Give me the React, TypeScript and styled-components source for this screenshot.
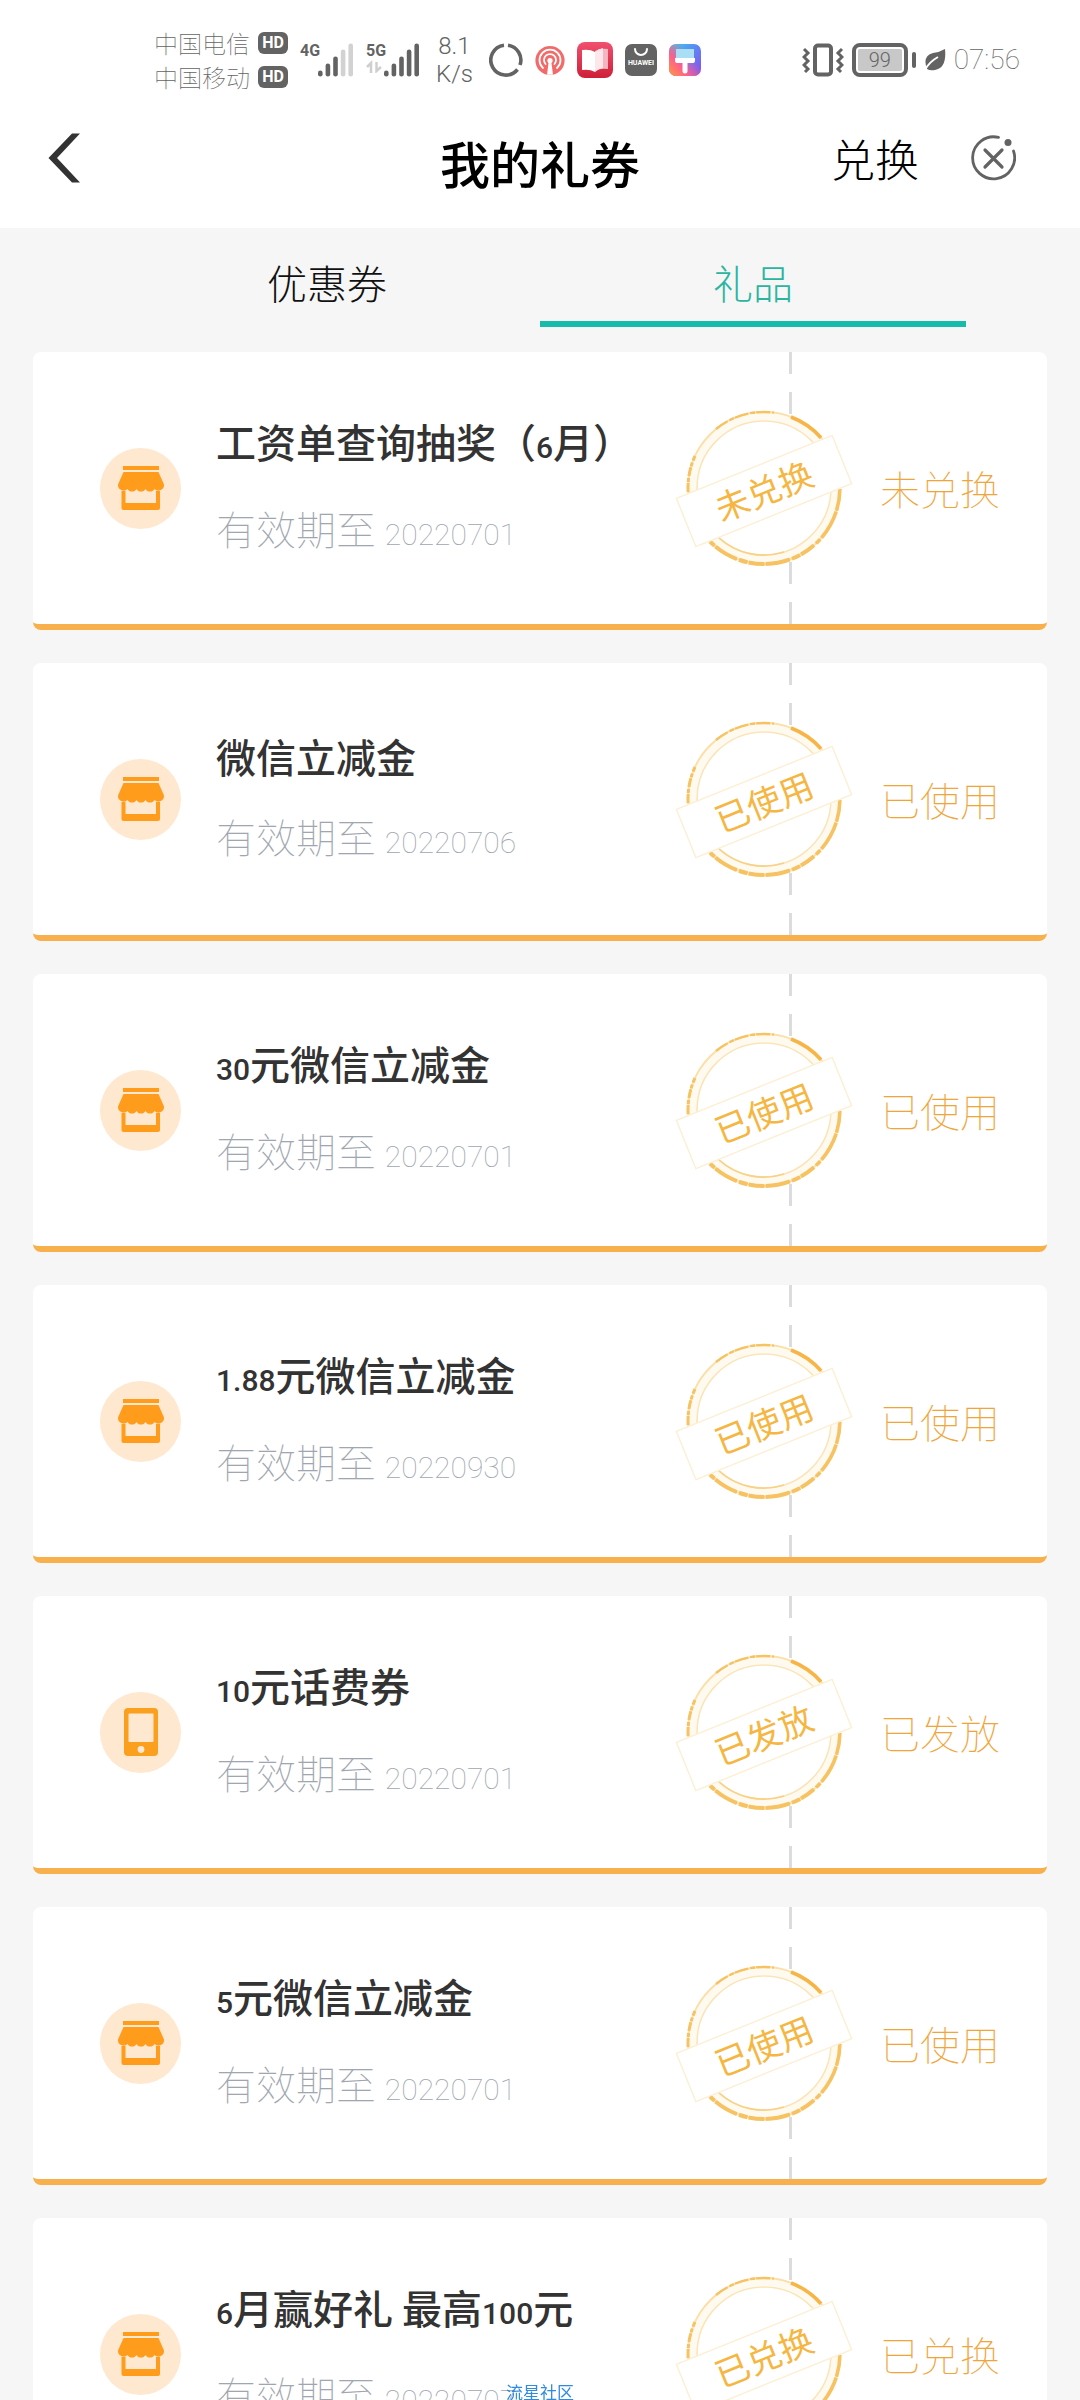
import React, { useState } from "react";
import styled, { createGlobalStyle } from "styled-components";

const sans = `"Noto Sans CJK SC", "Noto Sans", sans-serif`;
const ink = "#636363";
const amber = "#f0a53a";

const GlobalStyle = createGlobalStyle`
  * { box-sizing: border-box; }
  body { margin: 0; background: #f6f6f6; font-family: ${sans}; }
  button { border: 0; padding: 0; background: none; font-family: inherit; cursor: pointer; }
  h1, h2, p, ul { margin: 0; padding: 0; }
  svg { display: block; flex: none; }
`;

const Screen = styled.div`
  display: flex;
  flex-direction: column;
  height: 100vh;
  overflow: hidden;
`;

/* ---------- status bar ---------- */

const StatusBar = styled.div`
  display: flex;
  justify-content: space-between;
  align-items: center;
  flex: none;
  height: 100px;
  padding: 20px 60px 0 154px;
  background: #fff;
  color: ${ink};
`;

const StatusGroup = styled.div<{ $gap: number }>`
  display: flex;
  align-items: center;
  gap: ${(p) => p.$gap}px;
`;

const Carriers = styled.div`
  display: flex;
  flex-direction: column;
`;

const Carrier = styled.div`
  display: flex;
  align-items: center;
  gap: 8px;
  height: 34px;
  font-size: 24px;
  font-weight: 100;
  line-height: 34px;
  white-space: nowrap;
`;

const HdBadge = styled.span`
  width: 30px;
  height: 22px;
  border-radius: 6px;
  background: ${ink};
  color: #fff;
  font: 700 16px/22px Roboto, sans-serif;
  text-align: center;
`;

const Signal = styled.div`
  display: flex;
  align-items: flex-start;
  height: 34px;
`;

const SignalLabel = styled.span`
  width: 18px;
  font: 700 16px/16px "Liberation Sans Narrow", Roboto, sans-serif;
`;

const NetSpeed = styled.div`
  padding: 0 4px;
  font: 300 24px/28px Roboto, sans-serif;
  text-align: center;
`;

const BatteryLevel = styled.span`
  display: flex;
  align-items: center;
  justify-content: center;
  width: 56px;
  height: 34px;
  padding: 2px;
  border: 4px solid ${ink};
  border-radius: 8px;
  background: #c8c8c8 content-box;
  font: 300 20px/22px Roboto, sans-serif;
`;

const BatteryTip = styled.span`
  width: 4px;
  height: 16px;
  border-radius: 2px;
  background: ${ink};
`;

const Clock = styled.time`
  font: 100 28px/34px Roboto, sans-serif;
`;

/* ---------- header ---------- */

const Header = styled.header`
  display: grid;
  grid-template-columns: 1fr auto 1fr;
  align-items: center;
  flex: none;
  height: 128px;
  padding: 0 64px 12px 48px;
  background: #fff;
`;

const IconButton = styled.button`
  display: flex;
  justify-self: start;
`;

const Title = styled.h1`
  padding: 8px 0 0 16px;
  font-size: 50px;
  font-weight: 500;
  line-height: 64px;
  color: #000;
`;

const Actions = styled.div`
  display: flex;
  align-items: center;
  justify-content: flex-end;
  gap: 52px;
`;

const RedeemButton = styled.button`
  font-size: 44px;
  font-weight: 300;
  line-height: 64px;
  color: #000;
`;

/* ---------- tabs ---------- */

const Tabs = styled.nav`
  display: flex;
  flex: none;
  padding: 0 114px;
`;

const Tab = styled.button<{ $active: boolean }>`
  flex: 1;
  padding: 32px 0 17px;
  border-bottom: 6px solid ${(p) => (p.$active ? "#17bbac" : "transparent")};
  font-size: 40px;
  font-weight: 300;
  line-height: 44px;
  color: ${(p) => (p.$active ? "#2bb5a0" : "#111")};
`;

/* ---------- coupon list ---------- */

const CouponList = styled.ul`
  display: flex;
  flex-direction: column;
  flex: 1;
  gap: 33px;
  min-height: 0;
  padding: 25px 33px 33px;
  overflow-y: auto;
  scrollbar-width: none;
  list-style: none;
`;

const Coupon = styled.li`
  display: flex;
  flex: none;
  height: 278px;
  border-bottom: 6px solid #f7b04c;
  border-radius: 8px;
  background: #fff;
`;

const CouponMain = styled.div`
  display: flex;
  align-items: center;
  flex: 1;
  gap: 35px;
  padding-left: 67px;
`;

const IconDisc = styled.span`
  display: flex;
  align-items: center;
  justify-content: center;
  width: 81px;
  height: 81px;
  border-radius: 50%;
  background: #ffe8cf;
`;

const CouponText = styled.div`
  display: flex;
  flex-direction: column;
  gap: 24px;
`;

const CouponName = styled.h2`
  font-size: 40px;
  font-weight: 500;
  line-height: 56px;
  color: #333;
  white-space: pre;
`;

const Expiry = styled.p`
  font-size: 40px;
  font-weight: 100;
  line-height: 56px;
  color: #9fa6b0;
  white-space: pre;
`;

const Digits = styled.span`
  font-family: "Liberation Sans Narrow", Roboto, sans-serif;
  font-size: 30px;
`;

const Stub = styled.div`
  position: relative;
  display: flex;
  align-items: center;
  width: 258px;
  padding-left: 91px;
  background:
    repeating-linear-gradient(to bottom, #dcdcdc 0 22px, transparent 22px 40px) left top / 3px 50% no-repeat,
    repeating-linear-gradient(to top, #dcdcdc 0 22px, transparent 22px 40px) left bottom / 3px 50% no-repeat;
`;

const StatusText = styled.span`
  font-size: 40px;
  font-weight: 100;
  line-height: 56px;
  color: ${amber};
`;

const StampSvg = styled.svg`
  position: absolute;
  top: 50%;
  left: -119px;
  transform: translateY(-50%);
  font-family: ${sans};
  font-size: 34px;
  font-weight: 400;
`;

const Watermark = styled.div`
  position: fixed;
  right: 0;
  bottom: 0;
  left: 0;
  font-size: 17px;
  line-height: 16px;
  text-align: center;
  color: #2f8be0;
  pointer-events: none;
`;

/* ---------- drawings ---------- */

function Bars({ strength }: { strength: number }) {
  return (
    <svg width="36" height="34" viewBox="0 0 36 34">
      {[6, 13, 20, 27, 33].map((h, i) => (
        <rect
          key={h}
          x={i * 7.6}
          y={33.5 - h}
          width="4.6"
          height={h}
          rx="2.3"
          fill={i < strength ? ink : "#d2d2d2"}
        />
      ))}
    </svg>
  );
}

function ShopIcon() {
  return (
    <svg width="48" height="46" viewBox="0 0 48 46" fill="#ff9c1c">
      <rect x="6" y="1" width="36" height="4" />
      <path d="M6.500 7H41.500L47 19.500a5.600 5.600 0 0 1-9.500 4.500a5.200 5.200 0 0 1-9 0a5.200 5.200 0 0 1-9 0a5.200 5.200 0 0 1-9 0A5.600 5.600 0 0 1 1 19.500Z" />
      <path d="M4.500 26H8.500V38H39V26H43V43a2 2 0 0 1-2 2H6.500a2 2 0 0 1-2-2Z" />
    </svg>
  );
}

function PhoneIcon() {
  return (
    <svg width="34" height="48" viewBox="0 0 34 48">
      <rect width="34" height="48" rx="4" fill="#fa9f1e" />
      <rect x="4.500" y="5.500" width="25" height="28.500" rx="1" fill="#ffe8cf" />
      <circle cx="17" cy="41.500" r="3.400" fill="#ffe8cf" />
    </svg>
  );
}

function Stamp({ label }: { label: string }) {
  return (
    <StampSvg width="188" height="164" viewBox="-94 -82 188 164">
      <circle r="77" fill="#fff" />
      <circle r="72" fill="none" stroke="#fffaf0" strokeWidth="8" />
      <circle r="76" fill="none" stroke="#fbdfa6" strokeWidth="2" />
      <g fill="none" stroke="#f6c262">
        <path d="M-75.900 4A76 76 0 0 1-69-32" strokeWidth="3" strokeDasharray="9 1 4 2" />
        <path d="M-48-59A76 76 0 0 1 10-75.400" strokeWidth="2.400" strokeDasharray="14 2 5 1" />
        <path d="M27-71A76 76 0 0 1 57-50.300" strokeWidth="3.600" stroke="#f7b548" />
        <path d="M75.900 1A76 76 0 0 1 52 55.500" strokeWidth="3.600" strokeDasharray="22 1 30 2" />
        <path d="M50 57.300A76 76 0 0 1-54 53.500" strokeWidth="4" strokeDasharray="16 1 9 2 25 1" />
      </g>
      <circle r="67" fill="none" stroke="#fbe5b8" strokeWidth="1.600" />
      <path d="M-45 50A67 67 0 0 0 20 64" fill="none" stroke="#f8d184" strokeWidth="1.600" />
      <g transform="translate(0 3) rotate(-22)">
        <rect x="-84" y="-26" width="168" height="52" fill="#fff" stroke="#fcefd3" strokeWidth="1.400" />
        <text y="13" textAnchor="middle" fill="#f5b642">
          {label}
        </text>
      </g>
    </StampSvg>
  );
}

function ActivityIcons() {
  return (
    <>
      <svg width="34" height="34" viewBox="0 0 34 34" fill="none" stroke={ink} strokeWidth="3.600">
        <path d="M19 2.200A15 15 0 0 1 31 22M28.500 26.500A15 15 0 1 1 15 2.200" />
      </svg>
      <svg width="30" height="34" viewBox="0 0 30 34">
        <circle cx="15" cy="17.500" r="14.600" fill="#f26b6b" />
        <g fill="none" stroke="#fff" strokeWidth="1.800" strokeLinecap="round">
          <path d="M8 25a10.500 10.500 0 1 1 14 0M10.500 21a6 6 0 1 1 9 0" />
        </g>
        <circle cx="15" cy="17.500" r="2.600" fill="#fff" />
        <path d="M13.800 18h2.400l1.800 13.800h-6Z" fill="#fff" />
      </svg>
      <svg width="36" height="36" viewBox="0 0 36 36">
        <defs>
          <linearGradient id="book" x2="0" y2="1">
            <stop stopColor="#f0506e" />
            <stop offset="1" stopColor="#cf1f38" />
          </linearGradient>
        </defs>
        <rect width="36" height="36" rx="8" fill="url(#book)" />
        <path d="M18 9q5-3 13-2v20q-8-1-13 2Z" fill="#f7b6bf" />
        <path d="M5 8q8-1 13 2v20q-5-3-13-2Z" fill="#fff" />
        <path d="M18 10q3-3 8-4v20q-5 1-8 4Z" fill="#fde7ea" />
      </svg>
      <svg width="32" height="34" viewBox="0 0 32 34">
        <rect y="1" width="32" height="32" rx="7" fill={ink} />
        <path d="M10 6a6 6 0 0 0 12 0" fill="none" stroke="#fff" strokeWidth="2" strokeLinecap="round" />
        <text x="16" y="22" textAnchor="middle" fontFamily="Roboto, sans-serif" fontSize="7" fontWeight="700" fill="#fff">
          HUAWEI
        </text>
      </svg>
      <svg width="32" height="34" viewBox="0 0 32 34">
        <defs>
          <linearGradient id="themeLeft" x2="1" y2="1">
            <stop stopColor="#3fd0e8" />
            <stop offset="0.450" stopColor="#5a8af2" />
            <stop offset="1" stopColor="#8a4bf0" />
          </linearGradient>
          <linearGradient id="themeRight" x1="0" y1="1" x2="0.700" y2="0.400">
            <stop stopColor="#ff9a3c" />
            <stop offset="0.500" stopColor="#ff5f8a" />
            <stop offset="1" stopColor="#ff5f8a" stopOpacity="0" />
          </linearGradient>
        </defs>
        <rect y="1" width="32" height="32" rx="7" fill="url(#themeLeft)" />
        <rect y="1" width="32" height="32" rx="7" fill="url(#themeRight)" />
        <rect x="7" y="6" width="18" height="9" fill="#a9def5" />
        <path d="M6 15h20v3q0 2-2 2h-5.500v8a2.500 2.500 0 0 1-5 0v-8H8q-2 0-2-2Z" fill="#fff" />
      </svg>
    </>
  );
}

/* ---------- data ---------- */

type Gift = { name: string; expires: string; status: string; kind: "shop" | "phone" };

const gifts: Gift[] = [
  { name: "工资单查询抽奖（6月）", expires: "20220701", status: "未兑换", kind: "shop" },
  { name: "微信立减金", expires: "20220706", status: "已使用", kind: "shop" },
  { name: "30元微信立减金", expires: "20220701", status: "已使用", kind: "shop" },
  { name: "1.88元微信立减金", expires: "20220930", status: "已使用", kind: "shop" },
  { name: "10元话费券", expires: "20220701", status: "已发放", kind: "phone" },
  { name: "5元微信立减金", expires: "20220701", status: "已使用", kind: "shop" },
  { name: "6月赢好礼 最高100元", expires: "20220707", status: "已兑换", kind: "shop" },
];

const tabs = ["优惠券", "礼品"];

function MixedText({ text }: { text: string }) {
  return (
    <>
      {text.split(/([\d.]+)/).map((part, i) => (i % 2 ? <Digits key={i}>{part}</Digits> : part))}
    </>
  );
}

export default function App() {
  const [active, setActive] = useState(1);

  return (
    <Screen>
      <GlobalStyle />
      <StatusBar>
        <StatusGroup $gap={12}>
          <Carriers>
            <Carrier>中国电信<HdBadge>HD</HdBadge></Carrier>
            <Carrier>中国移动<HdBadge>HD</HdBadge></Carrier>
          </Carriers>
          <Signal>
            <SignalLabel>4G</SignalLabel>
            <Bars strength={3} />
          </Signal>
          <Signal>
            <SignalLabel>
              5G
              <svg width="16" height="14" viewBox="0 0 16 14" fill="none" stroke="#cfcfcf" strokeWidth="2.500">
                <path d="M1 8L5 4V14M15 8L10.500 12V3" />
              </svg>
            </SignalLabel>
            <Bars strength={5} />
          </Signal>
          <NetSpeed>8.1<br />K/s</NetSpeed>
          <ActivityIcons />
        </StatusGroup>
        <StatusGroup $gap={8}>
          <svg width="42" height="34" viewBox="0 0 42 34" fill="none" stroke={ink} strokeWidth="4">
            <rect x="13" y="2.500" width="16" height="29" rx="3" />
            <path d="M2 6l4 4-4 4 4 4-4 4 4 4-3 3M40 6l-4 4 4 4-4 4 4 4-4 4 3 3" strokeWidth="3" />
          </svg>
          <StatusGroup $gap={4}>
            <BatteryLevel>99</BatteryLevel>
            <BatteryTip />
          </StatusGroup>
          <svg width="22" height="24" viewBox="0 0 22 24">
            <path d="M21 1Q23 20 11 22Q6 23 3 21Q-2 8 9 5Q16 4 21 1Z" fill={ink} />
            <path d="M1 22Q5 14 14 9" fill="none" stroke="#fff" strokeWidth="2" />
          </svg>
          <Clock>07:56</Clock>
        </StatusGroup>
      </StatusBar>

      <Header>
        <IconButton aria-label="返回">
          <svg width="32" height="50" viewBox="0 0 32 50" fill="#333">
            <path d="M24 0.500H32L9 25L32 49.500H24L0.500 25Z" />
          </svg>
        </IconButton>
        <Title>我的礼券</Title>
        <Actions>
          <RedeemButton>兑换</RedeemButton>
          <IconButton aria-label="关闭">
            <svg width="45" height="46" viewBox="0 0 45 46" fill="none" stroke={ink} strokeWidth="2.800">
              <path d="M27.500 2.400A21 21 0 1 0 42.500 16" strokeLinecap="round" />
              <path d="M14 15L31 32M31 15L14 32" strokeWidth="3.200" strokeLinecap="round" />
              <circle cx="37" cy="7.500" r="3.500" fill={ink} stroke="none" />
            </svg>
          </IconButton>
        </Actions>
      </Header>

      <Tabs>
        {tabs.map((name, i) => (
          <Tab key={name} $active={i === active} aria-pressed={i === active} onClick={() => setActive(i)}>
            {name}
          </Tab>
        ))}
      </Tabs>

      <CouponList>
        {gifts.map((gift) => (
          <Coupon key={gift.name}>
            <CouponMain>
              <IconDisc>{gift.kind === "shop" ? <ShopIcon /> : <PhoneIcon />}</IconDisc>
              <CouponText>
                <CouponName><MixedText text={gift.name} /></CouponName>
                <Expiry><MixedText text={`有效期至 ${gift.expires}`} /></Expiry>
              </CouponText>
            </CouponMain>
            <Stub>
              <Stamp label={gift.status} />
              <StatusText>{gift.status}</StatusText>
            </Stub>
          </Coupon>
        ))}
      </CouponList>

      <Watermark>流星社区</Watermark>
    </Screen>
  );
}
